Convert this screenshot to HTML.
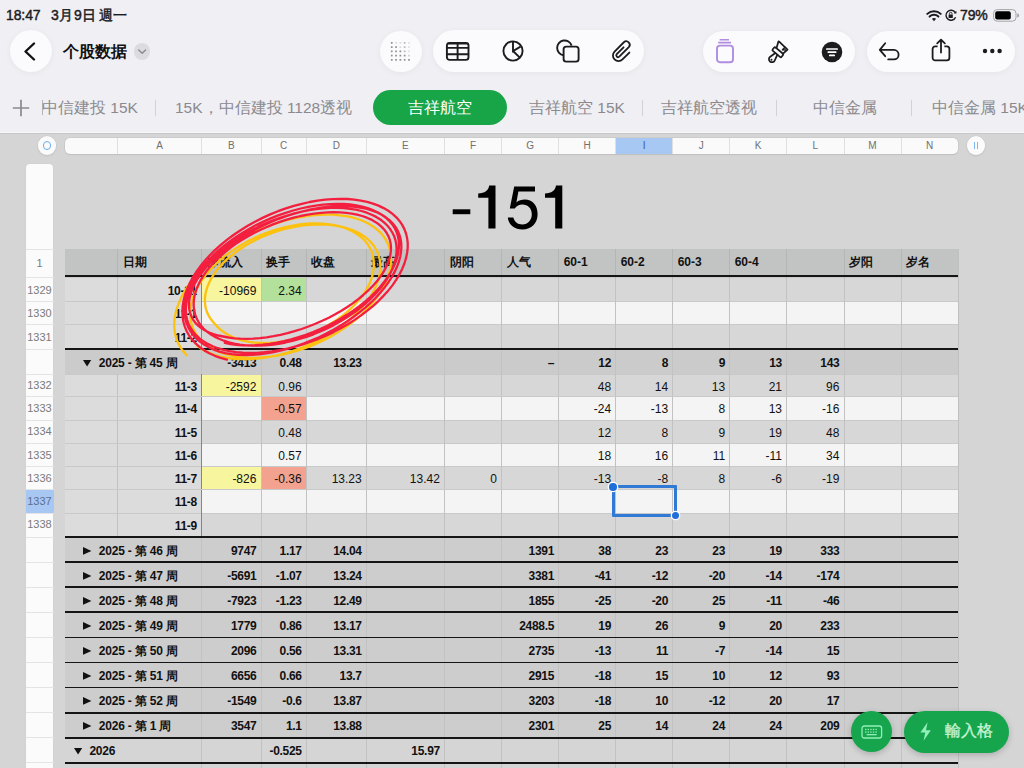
<!DOCTYPE html>
<html><head><meta charset="utf-8">
<style>
*{margin:0;padding:0;box-sizing:border-box}
html,body{width:1024px;height:768px;overflow:hidden}
body{position:relative;background:#d5d5d5;font-family:"Liberation Sans",sans-serif;color:#000}
.abs{position:absolute}
#top{position:absolute;left:0;top:0;width:1024px;height:134px;background:#f0eff4}
#topline{position:absolute;left:0;top:131.8px;width:1024px;height:1.5px;background:#f6f6f9}
.st{position:absolute;top:5.8px;font-size:14px;font-weight:normal;-webkit-text-stroke:0.45px #1c1c1e;color:#1c1c1e;letter-spacing:-0.1px;line-height:18px}
.pill{position:absolute;background:#fbfbfd;border-radius:21px;box-shadow:0 1px 6px rgba(0,0,0,0.05)}
.tab{position:absolute;top:97.6px;font-size:15.5px;color:#8a8a8e;line-height:20px;white-space:nowrap}
.sep{position:absolute;top:100px;width:1px;height:16px;background:#d2d2d6}
#cbar{position:absolute;left:64.5px;top:137.8px;width:893.5px;height:16.2px;background:#fafafa;border-radius:5px;box-shadow:0 0 0 0.6px #c4c4c4, 0 1px 1px rgba(0,0,0,0.12);overflow:hidden}
.cl{position:absolute;top:0;height:16.2px;line-height:16.5px;text-align:center;font-size:10px;color:#707070;border-left:1px solid #e0e0e0}
.cl.sel{background:#a8c8f4;color:#3a5a8a}
#rncol{position:absolute;left:25.5px;top:163.5px;width:27.6px;height:620px;background:#fbfbfb;border-radius:4px 4px 0 0;box-shadow:0 0 0 0.5px #cfcfcf}
.rn{position:absolute;left:25.5px;width:28px;text-align:center;font-size:11px;color:#7a7a7a}
.rn.sel{background:#a9c7f3;color:#5a6f90}
.rnl{position:absolute;left:25.5px;width:28px;height:1px;background:#e4e4e4}
.rb{position:absolute;left:64.5px;width:893.5px}
.fl{position:absolute}
.hl{position:absolute;left:64.5px;width:893.5px;height:1px;background:#c9c9c9}
.vl{position:absolute;width:1px;background:#c2c2c2}
.tk{position:absolute;left:64.5px;width:893.5px;height:1.9px;background:#151515}
.c{position:absolute;font-size:12px;text-align:right;padding-right:4.6px;padding-top:1.5px;white-space:nowrap;color:#111}
.c.b{font-weight:bold;letter-spacing:-0.3px}
.c.h{font-weight:bold;text-align:left;padding-left:5px;padding-right:0;padding-top:0;margin-top:-0.6px}
.gl{position:absolute;font-size:12px;font-weight:bold;white-space:nowrap;color:#111;padding-top:1.5px;letter-spacing:-0.2px}
.tri{display:inline-block;width:16.5px;font-size:11px}
#tleft{position:absolute;left:64.5px;top:249px;width:1px;height:540px;background:#c0c0c0}
</style></head><body>
<div id="top"></div>
<div id="topline"></div><div class="abs" style="left:0;top:133.3px;width:1024px;height:1.2px;background:#c6c6c8"></div>
<!-- status bar -->
<div class="st" style="left:6px">18:47</div><div class="st" style="left:51px;letter-spacing:0.6px">3月9日</div><div class="st" style="left:99px">週一</div>
<div class="st" style="left:960px">79%</div>
<svg class="abs" style="left:925.5px;top:9.6px" width="16" height="12" viewBox="0 0 16 12">
<path d="M8 11.2 L5.9 8.8 A3.2 3.2 0 0 1 10.1 8.8 Z" fill="#1c1c1e"/>
<path d="M3.6 6.6 A6.4 6.4 0 0 1 12.4 6.6" stroke="#1c1c1e" stroke-width="2" fill="none" stroke-linecap="round"/>
<path d="M1.3 3.9 A9.6 9.6 0 0 1 14.7 3.9" stroke="#1c1c1e" stroke-width="2" fill="none" stroke-linecap="round"/>
</svg>
<svg class="abs" style="left:944px;top:9px" width="14" height="13" viewBox="0 0 14 13">
<path d="M11.6 8.2 A5 5 0 1 1 11.2 3.5" stroke="#1c1c1e" stroke-width="1.4" fill="none"/>
<path d="M9.8 4.4 L12.6 4.6 L12.2 1.8 Z" fill="#1c1c1e"/>
<rect x="4.6" y="5.5" width="4.2" height="3.4" rx="0.5" fill="#1c1c1e"/>
<path d="M5.4 5.6 V4.6 A1.3 1.3 0 0 1 8 4.6 V5.6" stroke="#1c1c1e" stroke-width="0.9" fill="none"/>
</svg>
<svg class="abs" style="left:993px;top:9px" width="28" height="13" viewBox="0 0 28 13">
<rect x="0.6" y="0.6" width="22.4" height="11.6" rx="3.6" fill="none" stroke="#a5a5aa" stroke-width="1"/>
<rect x="2.2" y="2.2" width="15.6" height="8.4" rx="2" fill="#000"/>
<path d="M24.2 4.4 A2 2 0 0 1 24.2 8.4 Z" fill="#a5a5aa"/>
</svg>
<!-- back button -->
<div class="pill" style="left:9.6px;top:29.8px;width:42px;height:42px;border-radius:50%"></div>
<svg class="abs" style="left:20px;top:41px" width="20" height="21" viewBox="0 0 20 21">
<path d="M14 2.5 L5.5 10.5 L14 18.5" stroke="#111" stroke-width="2.4" fill="none" stroke-linecap="round" stroke-linejoin="round"/>
</svg>
<div class="abs" style="left:63.3px;top:42px;font-size:16px;font-weight:bold;color:#111;line-height:20px">个股数据</div>
<div class="abs" style="left:133.5px;top:43px;width:16.5px;height:16.5px;border-radius:50%;background:#dcdce0"></div>
<svg class="abs" style="left:133.5px;top:43px" width="17" height="17" viewBox="0 0 17 17">
<path d="M4.7 7 L8.2 10.2 L11.6 7" stroke="#8a8a8e" stroke-width="1.4" fill="none" stroke-linecap="round" stroke-linejoin="round"/>
</svg>
<!-- center toolbar -->
<div class="pill" style="left:380px;top:30.5px;width:41.5px;height:41.5px;border-radius:50%"></div>
<svg class="abs" style="left:380px;top:30px" width="42" height="42" viewBox="0 0 42 42"><g fill="#8e8e93"><rect x="10.90" y="12.00" width="1.7" height="1.7" opacity="1"/><rect x="15.20" y="12.00" width="1.7" height="1.7" opacity="0.3"/><rect x="19.50" y="12.00" width="1.7" height="1.7" opacity="0.3"/><rect x="23.80" y="12.00" width="1.7" height="1.7" opacity="0.6"/><rect x="28.10" y="12.00" width="1.7" height="1.7" opacity="0.25"/><rect x="10.90" y="16.25" width="1.7" height="1.7" opacity="1"/><rect x="15.20" y="16.25" width="1.7" height="1.7" opacity="1"/><rect x="19.50" y="16.25" width="1.7" height="1.7" opacity="0.3"/><rect x="23.80" y="16.25" width="1.7" height="1.7" opacity="0.6"/><rect x="28.10" y="16.25" width="1.7" height="1.7" opacity="0.25"/><rect x="10.90" y="20.50" width="1.7" height="1.7" opacity="1"/><rect x="15.20" y="20.50" width="1.7" height="1.7" opacity="1"/><rect x="19.50" y="20.50" width="1.7" height="1.7" opacity="1"/><rect x="23.80" y="20.50" width="1.7" height="1.7" opacity="0.6"/><rect x="28.10" y="20.50" width="1.7" height="1.7" opacity="0.25"/><rect x="10.90" y="24.75" width="1.7" height="1.7" opacity="1"/><rect x="15.20" y="24.75" width="1.7" height="1.7" opacity="1"/><rect x="19.50" y="24.75" width="1.7" height="1.7" opacity="1"/><rect x="23.80" y="24.75" width="1.7" height="1.7" opacity="1"/><rect x="28.10" y="24.75" width="1.7" height="1.7" opacity="0.4"/><rect x="10.90" y="29.00" width="1.7" height="1.7" opacity="1"/><rect x="15.20" y="29.00" width="1.7" height="1.7" opacity="1"/><rect x="19.50" y="29.00" width="1.7" height="1.7" opacity="1"/><rect x="23.80" y="29.00" width="1.7" height="1.7" opacity="1"/><rect x="28.10" y="29.00" width="1.7" height="1.7" opacity="1"/></g></svg>
<div class="pill" style="left:433px;top:30px;width:211px;height:42px"></div>
<svg class="abs" style="left:445px;top:41px" width="26" height="21" viewBox="0 0 26 21">
<rect x="1.9" y="1.9" width="21.6" height="17" rx="2.6" fill="none" stroke="#1c1c1e" stroke-width="1.9"/>
<path d="M1.9 2.6 H23.5 M1.9 6.9 H23.5 M1.9 13.3 H23.5 M12.6 3 V18.9" stroke="#1c1c1e" stroke-width="1.9"/>
</svg>
<svg class="abs" style="left:501px;top:39px" width="24" height="24" viewBox="0 0 24 24">
<circle cx="12" cy="12" r="9.6" fill="none" stroke="#1c1c1e" stroke-width="1.9"/>
<path d="M12 2.4 V12 L19.5 7.6 M12 12 L18.6 18.4" stroke="#1c1c1e" stroke-width="1.9" fill="none"/>
</svg>
<svg class="abs" style="left:554px;top:38px" width="28" height="26" viewBox="0 0 28 26">
<path d="M9.6 17.2 A7.4 7.4 0 1 1 17.6 7.6" fill="none" stroke="#1c1c1e" stroke-width="1.9"/>
<rect x="9.6" y="8.6" width="15" height="15" rx="2.6" fill="none" stroke="#1c1c1e" stroke-width="1.9"/>
</svg>
<svg class="abs" style="left:606px;top:36px" width="32" height="30" viewBox="0 0 32 30">
<g transform="rotate(-45)"><path d="M4.41 20.43 L-5.23 20.43 A1.8 1.8 0 0 0 -5.23 24.02 L8.2 24.02 A3.5 3.5 0 0 0 8.2 17.03 L-4.92 17.03 A5.6 5.6 0 0 0 -4.92 28.24 L4.84 28.24" fill="none" stroke="#1c1c1e" stroke-width="1.8" stroke-linecap="round"/></g>
</svg>
<!-- right toolbar 1 -->
<div class="pill" style="left:703px;top:30.5px;width:152px;height:41.5px"></div>
<svg class="abs" style="left:714px;top:38px" width="22" height="26" viewBox="0 0 22 26">
<path d="M5.6 1.8 H15 M4.2 4.6 H17" stroke="#b08de0" stroke-width="1.6"/>
<rect x="3" y="7.6" width="16" height="16.6" rx="3" fill="none" stroke="#b08de0" stroke-width="1.9"/>
</svg>
<svg class="abs" style="left:764px;top:36px" width="30" height="30" viewBox="0 0 30 30">
<g transform="translate(15.24 14.52) rotate(40)" fill="none" stroke="#1c1c1e" stroke-width="1.75" stroke-linejoin="round" stroke-linecap="round">
<path d="M-3.6 0 L-6.3 -6.1 Q-6.5 -6.8 -5.8 -6.8 L5.7 -6.1 L5.0 0"/>
<rect x="-5.8" y="0" width="11.6" height="4.4" rx="1.2"/>
<path d="M-1.3 4.4 L-2.9 10.6 A3 3 0 1 0 2.9 10.6 L1.3 4.4"/>
<path d="M2.4 -6.1 L2.0 -2.6 L4.6 -4.4" stroke-width="1.5"/>
<circle cx="0" cy="12" r="1" fill="#1c1c1e" stroke="none"/>
</g>
</svg>
<svg class="abs" style="left:821px;top:40.5px" width="22" height="22" viewBox="0 0 22 22">
<circle cx="11" cy="11" r="10.3" fill="#1c1c1e"/>
<path d="M5.8 8 H16.2 M7.3 11.2 H14.7 M8.8 14.4 H13.2" stroke="#fff" stroke-width="1.7" stroke-linecap="round"/>
</svg>
<!-- right toolbar 2 -->
<div class="pill" style="left:867px;top:30.5px;width:148px;height:41.5px"></div>
<svg class="abs" style="left:878px;top:41px" width="22" height="20" viewBox="0 0 22 20">
<path d="M7.2 2.2 L1.8 8.9 L7.2 15.2 M2.2 8.9 H15.85 A4.75 4.75 0 0 1 15.85 18.4 H10.2" fill="none" stroke="#1c1c1e" stroke-width="1.8" stroke-linecap="round" stroke-linejoin="round"/>
</svg>
<svg class="abs" style="left:930px;top:38px" width="22" height="24" viewBox="0 0 22 24">
<path d="M7.6 8.4 H5.2 A2.6 2.6 0 0 0 2.6 11 V19.8 A2.6 2.6 0 0 0 5.2 22.4 H16.8 A2.6 2.6 0 0 0 19.4 19.8 V11 A2.6 2.6 0 0 0 16.8 8.4 H14.4" fill="none" stroke="#1c1c1e" stroke-width="1.8"/>
<path d="M11 14.6 V1.8 M7.2 5.4 L11 1.6 L14.8 5.4" fill="none" stroke="#1c1c1e" stroke-width="1.8" stroke-linecap="round" stroke-linejoin="round"/>
</svg>
<svg class="abs" style="left:981px;top:48px" width="23" height="6" viewBox="0 0 23 6">
<circle cx="4" cy="3" r="2.2" fill="#1c1c1e"/><circle cx="11.3" cy="3" r="2.2" fill="#1c1c1e"/><circle cx="18.6" cy="3" r="2.2" fill="#1c1c1e"/>
</svg>
<!-- tabs -->
<svg class="abs" style="left:12px;top:99px" width="18" height="18" viewBox="0 0 18 18">
<path d="M9 0.8 V17.2 M0.8 9 H17.2" stroke="#8a8a8e" stroke-width="1.7"/>
</svg>
<div class="sep" style="left:42px;top:100px;height:15px;width:1px;background:#b4b4b9"></div>
<div class="tab" style="left:42px">中信建投 15K</div>
<div class="sep" style="left:155px"></div>
<div class="tab" style="left:175px">15K，中信建投 1128透视</div>
<div class="abs" style="left:372.5px;top:89.5px;width:134.5px;height:35.5px;border-radius:18px;background:#17a548"></div>
<div class="tab" style="left:408px;color:#fff">吉祥航空</div>
<div class="tab" style="left:529px">吉祥航空 15K</div>
<div class="sep" style="left:641.5px"></div>
<div class="tab" style="left:661px">吉祥航空透视</div>
<div class="sep" style="left:776px"></div>
<div class="tab" style="left:812.5px">中信金属</div>
<div class="sep" style="left:910.5px"></div>
<div class="tab" style="left:932px">中信金属 15K</div>
<!-- column bar -->
<div class="abs" style="left:37.5px;top:136.3px;width:18.6px;height:18.6px;border-radius:50%;background:#fbfbfb;box-shadow:0 0 0 0.5px #c8c8c8,0 1px 2px rgba(0,0,0,0.1)"></div>
<div class="abs" style="left:42.6px;top:141.4px;width:8.4px;height:8.4px;border-radius:50%;border:1.6px solid #6aaef0"></div>
<div id="cbar">
<div class="cl" style="left:-0.5px;width:53px"></div>
<div class="cl" style="left:52.5px;width:84px">A</div>
<div class="cl" style="left:136.5px;width:59.5px">B</div>
<div class="cl" style="left:196px;width:45.3px">C</div>
<div class="cl" style="left:241.3px;width:60px">D</div>
<div class="cl" style="left:301.3px;width:78.2px">E</div>
<div class="cl" style="left:379.5px;width:57px">F</div>
<div class="cl" style="left:436.5px;width:57.2px">G</div>
<div class="cl" style="left:493.7px;width:57px">H</div>
<div class="cl sel" style="left:550.7px;width:57px">I</div>
<div class="cl" style="left:607.7px;width:57px">J</div>
<div class="cl" style="left:664.7px;width:56.9px">K</div>
<div class="cl" style="left:721.6px;width:57.4px">L</div>
<div class="cl" style="left:779px;width:57px">M</div>
<div class="cl" style="left:836px;width:57px">N</div>
</div>
<div class="abs" style="left:966.7px;top:136.3px;width:18.6px;height:18.6px;border-radius:50%;background:#fbfbfb;box-shadow:0 0 0 0.5px #c8c8c8,0 1px 2px rgba(0,0,0,0.1)"></div>
<div class="abs" style="left:973.8px;top:141.6px;width:1.2px;height:7.6px;background:#7db5ee"></div>
<div class="abs" style="left:977.2px;top:141.6px;width:1.2px;height:7.6px;background:#7db5ee"></div>
<!-- row number column -->
<div id="rncol"></div>
<div class="rn" style="top:249px;height:28.5px;line-height:28.5px">1</div>
<div class="rnl" style="top:248.5px"></div>
<div class="rn" style="top:277.5px;height:24px;line-height:24px">1329</div>
<div class="rnl" style="top:277px"></div>
<div class="rn" style="top:301.5px;height:23.2px;line-height:23.2px">1330</div>
<div class="rnl" style="top:301px"></div>
<div class="rn" style="top:324.7px;height:24.3px;line-height:24.3px">1331</div>
<div class="rnl" style="top:324.2px"></div>
<div class="rn" style="top:349px;height:25.3px;line-height:25.3px"></div>
<div class="rnl" style="top:348.5px"></div>
<div class="rn" style="top:374.3px;height:22.2px;line-height:22.2px">1332</div>
<div class="rnl" style="top:373.8px"></div>
<div class="rn" style="top:396.5px;height:23.8px;line-height:23.8px">1333</div>
<div class="rnl" style="top:396px"></div>
<div class="rn" style="top:420.3px;height:23.3px;line-height:23.3px">1334</div>
<div class="rnl" style="top:419.8px"></div>
<div class="rn" style="top:443.6px;height:23px;line-height:23px">1335</div>
<div class="rnl" style="top:443.1px"></div>
<div class="rn" style="top:466.6px;height:22.9px;line-height:22.9px">1336</div>
<div class="rnl" style="top:466.1px"></div>
<div class="rn sel" style="top:489.5px;height:23.9px;line-height:23.9px">1337</div>
<div class="rnl" style="top:489px"></div>
<div class="rn" style="top:513.4px;height:23.9px;line-height:23.9px">1338</div>
<div class="rnl" style="top:512.9px"></div>
<div class="rn" style="top:537.3px;height:25.05px;line-height:25.05px"></div>
<div class="rnl" style="top:536.8px"></div>
<div class="rn" style="top:562.35px;height:25.05px;line-height:25.05px"></div>
<div class="rnl" style="top:561.85px"></div>
<div class="rn" style="top:587.4px;height:25.05px;line-height:25.05px"></div>
<div class="rnl" style="top:586.9px"></div>
<div class="rn" style="top:612.45px;height:25.05px;line-height:25.05px"></div>
<div class="rnl" style="top:611.95px"></div>
<div class="rn" style="top:637.5px;height:25.05px;line-height:25.05px"></div>
<div class="rnl" style="top:637px"></div>
<div class="rn" style="top:662.55px;height:25.05px;line-height:25.05px"></div>
<div class="rnl" style="top:662.05px"></div>
<div class="rn" style="top:687.6px;height:25.05px;line-height:25.05px"></div>
<div class="rnl" style="top:687.1px"></div>
<div class="rn" style="top:712.65px;height:25.05px;line-height:25.05px"></div>
<div class="rnl" style="top:712.15px"></div>
<div class="rn" style="top:737.7px;height:25.05px;line-height:25.05px"></div>
<div class="rnl" style="top:737.2px"></div>
<div class="rn" style="top:762.75px;height:25.05px;line-height:25.05px"></div>
<div class="rnl" style="top:762.25px"></div>
<!-- title -->
<svg class="abs" style="left:0;top:0" width="1024" height="240" viewBox="0 0 1024 240">
<g fill="#000">
<rect x="452.7" y="209.3" width="17.6" height="4.9"/>
<path d="M495.5 185.6 V228.6 H488.4 V197.8 H478.2 V193.4 C485 193.2 488.2 191 489.2 185.6 Z"/>
<path d="M562.3 185.6 V228.6 H555.2 V197.8 H545 V193.4 C551.8 193.2 555 191 556 185.6 Z"/>
<path d="M514.2 186.4 H535 V191.6 H518.4 L516.4 202.4 C518.6 200.6 521.6 199.6 524.8 199.6 C532.4 199.6 537.6 205.4 537.6 214.2 C537.6 223.4 531.4 229.4 522.6 229.4 C514.2 229.4 508.6 224.8 507.8 217.4 H513.4 C514.2 221.6 517.6 224.4 522.4 224.4 C528 224.4 531.8 220.2 531.8 214.2 C531.8 208.4 527.8 204.6 522.4 204.6 C519.2 204.6 516.6 206 514.8 208.4 H509.8 Z"/>
</g></svg>
<!-- table -->
<div id="tleft"></div>
<div class="rb" style="top:249px;height:28.5px;background:#c1c4c3"></div>
<div class="rb" style="top:277.5px;height:24px;background:#d7d7d7"></div>
<div class="fl" style="left:64.5px;top:277.5px;width:137px;height:24px;background:#dcdcdc"></div>
<div class="fl" style="left:201.5px;top:277.5px;width:59.5px;height:24px;background:#f7f59e"></div>
<div class="fl" style="left:261px;top:277.5px;width:45.3px;height:24px;background:#b3e09b"></div>
<div class="rb" style="top:301.5px;height:23.2px;background:#f4f4f4"></div>
<div class="fl" style="left:64.5px;top:301.5px;width:137px;height:23.2px;background:#dcdcdc"></div>
<div class="rb" style="top:324.7px;height:24.3px;background:#d7d7d7"></div>
<div class="fl" style="left:64.5px;top:324.7px;width:137px;height:24.3px;background:#dcdcdc"></div>
<div class="rb" style="top:349px;height:25.3px;background:#cbcbcb"></div>
<div class="rb" style="top:374.3px;height:22.2px;background:#d7d7d7"></div>
<div class="fl" style="left:64.5px;top:374.3px;width:137px;height:22.2px;background:#dcdcdc"></div>
<div class="fl" style="left:201.5px;top:374.3px;width:59.5px;height:22.2px;background:#f7f59e"></div>
<div class="rb" style="top:396.5px;height:23.8px;background:#f4f4f4"></div>
<div class="fl" style="left:64.5px;top:396.5px;width:137px;height:23.8px;background:#dcdcdc"></div>
<div class="fl" style="left:261px;top:396.5px;width:45.3px;height:23.8px;background:#f3a290"></div>
<div class="rb" style="top:420.3px;height:23.3px;background:#d7d7d7"></div>
<div class="fl" style="left:64.5px;top:420.3px;width:137px;height:23.3px;background:#dcdcdc"></div>
<div class="rb" style="top:443.6px;height:23px;background:#f4f4f4"></div>
<div class="fl" style="left:64.5px;top:443.6px;width:137px;height:23px;background:#dcdcdc"></div>
<div class="rb" style="top:466.6px;height:22.9px;background:#d7d7d7"></div>
<div class="fl" style="left:64.5px;top:466.6px;width:137px;height:22.9px;background:#dcdcdc"></div>
<div class="fl" style="left:201.5px;top:466.6px;width:59.5px;height:22.9px;background:#f7f59e"></div>
<div class="fl" style="left:261px;top:466.6px;width:45.3px;height:22.9px;background:#f3a290"></div>
<div class="rb" style="top:489.5px;height:23.9px;background:#f4f4f4"></div>
<div class="fl" style="left:64.5px;top:489.5px;width:137px;height:23.9px;background:#dcdcdc"></div>
<div class="rb" style="top:513.4px;height:23.9px;background:#d7d7d7"></div>
<div class="fl" style="left:64.5px;top:513.4px;width:137px;height:23.9px;background:#dcdcdc"></div>
<div class="rb" style="top:537.3px;height:25.05px;background:#cdcdcd"></div>
<div class="rb" style="top:562.35px;height:25.05px;background:#cdcdcd"></div>
<div class="rb" style="top:587.4px;height:25.05px;background:#cdcdcd"></div>
<div class="rb" style="top:612.45px;height:25.05px;background:#cdcdcd"></div>
<div class="rb" style="top:637.5px;height:25.05px;background:#cdcdcd"></div>
<div class="rb" style="top:662.55px;height:25.05px;background:#cdcdcd"></div>
<div class="rb" style="top:687.6px;height:25.05px;background:#cdcdcd"></div>
<div class="rb" style="top:712.65px;height:25.05px;background:#cdcdcd"></div>
<div class="rb" style="top:737.7px;height:25.05px;background:#d5d5d5"></div>
<div class="rb" style="top:762.75px;height:25.05px;background:#d5d5d5"></div>
<div class="hl" style="top:277px"></div>
<div class="hl" style="top:301px"></div>
<div class="hl" style="top:324.2px"></div>
<div class="hl" style="top:348.5px"></div>
<div class="hl" style="top:373.8px"></div>
<div class="hl" style="top:396px"></div>
<div class="hl" style="top:419.8px"></div>
<div class="hl" style="top:443.1px"></div>
<div class="hl" style="top:466.1px"></div>
<div class="hl" style="top:489px"></div>
<div class="hl" style="top:512.9px"></div>
<div class="hl" style="top:536.8px"></div>
<div class="hl" style="top:561.85px"></div>
<div class="hl" style="top:586.9px"></div>
<div class="hl" style="top:611.95px"></div>
<div class="hl" style="top:637px"></div>
<div class="hl" style="top:662.05px"></div>
<div class="hl" style="top:687.1px"></div>
<div class="hl" style="top:712.15px"></div>
<div class="hl" style="top:737.2px"></div>
<div class="hl" style="top:762.25px"></div>
<div class="vl" style="left:117px;top:249px;height:28.5px;background:#b3b6b5"></div>
<div class="vl" style="left:201px;top:249px;height:28.5px;background:#b3b6b5"></div>
<div class="vl" style="left:260.5px;top:249px;height:28.5px;background:#b3b6b5"></div>
<div class="vl" style="left:305.8px;top:249px;height:28.5px;background:#b3b6b5"></div>
<div class="vl" style="left:365.8px;top:249px;height:28.5px;background:#b3b6b5"></div>
<div class="vl" style="left:444px;top:249px;height:28.5px;background:#b3b6b5"></div>
<div class="vl" style="left:501px;top:249px;height:28.5px;background:#b3b6b5"></div>
<div class="vl" style="left:558.2px;top:249px;height:28.5px;background:#b3b6b5"></div>
<div class="vl" style="left:615.2px;top:249px;height:28.5px;background:#b3b6b5"></div>
<div class="vl" style="left:672.2px;top:249px;height:28.5px;background:#b3b6b5"></div>
<div class="vl" style="left:729.2px;top:249px;height:28.5px;background:#b3b6b5"></div>
<div class="vl" style="left:786.1px;top:249px;height:28.5px;background:#b3b6b5"></div>
<div class="vl" style="left:843.5px;top:249px;height:28.5px;background:#b3b6b5"></div>
<div class="vl" style="left:900.5px;top:249px;height:28.5px;background:#b3b6b5"></div>
<div class="vl" style="left:117px;top:277.5px;height:24px"></div>
<div class="vl" style="left:201px;top:277.5px;height:24px;background:#858585"></div>
<div class="vl" style="left:260.5px;top:277.5px;height:24px"></div>
<div class="vl" style="left:305.8px;top:277.5px;height:24px"></div>
<div class="vl" style="left:365.8px;top:277.5px;height:24px"></div>
<div class="vl" style="left:444px;top:277.5px;height:24px"></div>
<div class="vl" style="left:501px;top:277.5px;height:24px"></div>
<div class="vl" style="left:558.2px;top:277.5px;height:24px"></div>
<div class="vl" style="left:615.2px;top:277.5px;height:24px"></div>
<div class="vl" style="left:672.2px;top:277.5px;height:24px"></div>
<div class="vl" style="left:729.2px;top:277.5px;height:24px"></div>
<div class="vl" style="left:786.1px;top:277.5px;height:24px"></div>
<div class="vl" style="left:843.5px;top:277.5px;height:24px"></div>
<div class="vl" style="left:900.5px;top:277.5px;height:24px"></div>
<div class="vl" style="left:117px;top:301.5px;height:23.2px"></div>
<div class="vl" style="left:201px;top:301.5px;height:23.2px;background:#858585"></div>
<div class="vl" style="left:260.5px;top:301.5px;height:23.2px"></div>
<div class="vl" style="left:305.8px;top:301.5px;height:23.2px"></div>
<div class="vl" style="left:365.8px;top:301.5px;height:23.2px"></div>
<div class="vl" style="left:444px;top:301.5px;height:23.2px"></div>
<div class="vl" style="left:501px;top:301.5px;height:23.2px"></div>
<div class="vl" style="left:558.2px;top:301.5px;height:23.2px"></div>
<div class="vl" style="left:615.2px;top:301.5px;height:23.2px"></div>
<div class="vl" style="left:672.2px;top:301.5px;height:23.2px"></div>
<div class="vl" style="left:729.2px;top:301.5px;height:23.2px"></div>
<div class="vl" style="left:786.1px;top:301.5px;height:23.2px"></div>
<div class="vl" style="left:843.5px;top:301.5px;height:23.2px"></div>
<div class="vl" style="left:900.5px;top:301.5px;height:23.2px"></div>
<div class="vl" style="left:117px;top:324.7px;height:24.3px"></div>
<div class="vl" style="left:201px;top:324.7px;height:24.3px;background:#858585"></div>
<div class="vl" style="left:260.5px;top:324.7px;height:24.3px"></div>
<div class="vl" style="left:305.8px;top:324.7px;height:24.3px"></div>
<div class="vl" style="left:365.8px;top:324.7px;height:24.3px"></div>
<div class="vl" style="left:444px;top:324.7px;height:24.3px"></div>
<div class="vl" style="left:501px;top:324.7px;height:24.3px"></div>
<div class="vl" style="left:558.2px;top:324.7px;height:24.3px"></div>
<div class="vl" style="left:615.2px;top:324.7px;height:24.3px"></div>
<div class="vl" style="left:672.2px;top:324.7px;height:24.3px"></div>
<div class="vl" style="left:729.2px;top:324.7px;height:24.3px"></div>
<div class="vl" style="left:786.1px;top:324.7px;height:24.3px"></div>
<div class="vl" style="left:843.5px;top:324.7px;height:24.3px"></div>
<div class="vl" style="left:900.5px;top:324.7px;height:24.3px"></div>
<div class="vl" style="left:201px;top:349px;height:25.3px"></div>
<div class="vl" style="left:260.5px;top:349px;height:25.3px"></div>
<div class="vl" style="left:305.8px;top:349px;height:25.3px"></div>
<div class="vl" style="left:365.8px;top:349px;height:25.3px"></div>
<div class="vl" style="left:444px;top:349px;height:25.3px"></div>
<div class="vl" style="left:501px;top:349px;height:25.3px"></div>
<div class="vl" style="left:558.2px;top:349px;height:25.3px"></div>
<div class="vl" style="left:615.2px;top:349px;height:25.3px"></div>
<div class="vl" style="left:672.2px;top:349px;height:25.3px"></div>
<div class="vl" style="left:729.2px;top:349px;height:25.3px"></div>
<div class="vl" style="left:786.1px;top:349px;height:25.3px"></div>
<div class="vl" style="left:843.5px;top:349px;height:25.3px"></div>
<div class="vl" style="left:900.5px;top:349px;height:25.3px"></div>
<div class="vl" style="left:117px;top:374.3px;height:22.2px"></div>
<div class="vl" style="left:201px;top:374.3px;height:22.2px;background:#858585"></div>
<div class="vl" style="left:260.5px;top:374.3px;height:22.2px"></div>
<div class="vl" style="left:305.8px;top:374.3px;height:22.2px"></div>
<div class="vl" style="left:365.8px;top:374.3px;height:22.2px"></div>
<div class="vl" style="left:444px;top:374.3px;height:22.2px"></div>
<div class="vl" style="left:501px;top:374.3px;height:22.2px"></div>
<div class="vl" style="left:558.2px;top:374.3px;height:22.2px"></div>
<div class="vl" style="left:615.2px;top:374.3px;height:22.2px"></div>
<div class="vl" style="left:672.2px;top:374.3px;height:22.2px"></div>
<div class="vl" style="left:729.2px;top:374.3px;height:22.2px"></div>
<div class="vl" style="left:786.1px;top:374.3px;height:22.2px"></div>
<div class="vl" style="left:843.5px;top:374.3px;height:22.2px"></div>
<div class="vl" style="left:900.5px;top:374.3px;height:22.2px"></div>
<div class="vl" style="left:117px;top:396.5px;height:23.8px"></div>
<div class="vl" style="left:201px;top:396.5px;height:23.8px;background:#858585"></div>
<div class="vl" style="left:260.5px;top:396.5px;height:23.8px"></div>
<div class="vl" style="left:305.8px;top:396.5px;height:23.8px"></div>
<div class="vl" style="left:365.8px;top:396.5px;height:23.8px"></div>
<div class="vl" style="left:444px;top:396.5px;height:23.8px"></div>
<div class="vl" style="left:501px;top:396.5px;height:23.8px"></div>
<div class="vl" style="left:558.2px;top:396.5px;height:23.8px"></div>
<div class="vl" style="left:615.2px;top:396.5px;height:23.8px"></div>
<div class="vl" style="left:672.2px;top:396.5px;height:23.8px"></div>
<div class="vl" style="left:729.2px;top:396.5px;height:23.8px"></div>
<div class="vl" style="left:786.1px;top:396.5px;height:23.8px"></div>
<div class="vl" style="left:843.5px;top:396.5px;height:23.8px"></div>
<div class="vl" style="left:900.5px;top:396.5px;height:23.8px"></div>
<div class="vl" style="left:117px;top:420.3px;height:23.3px"></div>
<div class="vl" style="left:201px;top:420.3px;height:23.3px;background:#858585"></div>
<div class="vl" style="left:260.5px;top:420.3px;height:23.3px"></div>
<div class="vl" style="left:305.8px;top:420.3px;height:23.3px"></div>
<div class="vl" style="left:365.8px;top:420.3px;height:23.3px"></div>
<div class="vl" style="left:444px;top:420.3px;height:23.3px"></div>
<div class="vl" style="left:501px;top:420.3px;height:23.3px"></div>
<div class="vl" style="left:558.2px;top:420.3px;height:23.3px"></div>
<div class="vl" style="left:615.2px;top:420.3px;height:23.3px"></div>
<div class="vl" style="left:672.2px;top:420.3px;height:23.3px"></div>
<div class="vl" style="left:729.2px;top:420.3px;height:23.3px"></div>
<div class="vl" style="left:786.1px;top:420.3px;height:23.3px"></div>
<div class="vl" style="left:843.5px;top:420.3px;height:23.3px"></div>
<div class="vl" style="left:900.5px;top:420.3px;height:23.3px"></div>
<div class="vl" style="left:117px;top:443.6px;height:23px"></div>
<div class="vl" style="left:201px;top:443.6px;height:23px;background:#858585"></div>
<div class="vl" style="left:260.5px;top:443.6px;height:23px"></div>
<div class="vl" style="left:305.8px;top:443.6px;height:23px"></div>
<div class="vl" style="left:365.8px;top:443.6px;height:23px"></div>
<div class="vl" style="left:444px;top:443.6px;height:23px"></div>
<div class="vl" style="left:501px;top:443.6px;height:23px"></div>
<div class="vl" style="left:558.2px;top:443.6px;height:23px"></div>
<div class="vl" style="left:615.2px;top:443.6px;height:23px"></div>
<div class="vl" style="left:672.2px;top:443.6px;height:23px"></div>
<div class="vl" style="left:729.2px;top:443.6px;height:23px"></div>
<div class="vl" style="left:786.1px;top:443.6px;height:23px"></div>
<div class="vl" style="left:843.5px;top:443.6px;height:23px"></div>
<div class="vl" style="left:900.5px;top:443.6px;height:23px"></div>
<div class="vl" style="left:117px;top:466.6px;height:22.9px"></div>
<div class="vl" style="left:201px;top:466.6px;height:22.9px;background:#858585"></div>
<div class="vl" style="left:260.5px;top:466.6px;height:22.9px"></div>
<div class="vl" style="left:305.8px;top:466.6px;height:22.9px"></div>
<div class="vl" style="left:365.8px;top:466.6px;height:22.9px"></div>
<div class="vl" style="left:444px;top:466.6px;height:22.9px"></div>
<div class="vl" style="left:501px;top:466.6px;height:22.9px"></div>
<div class="vl" style="left:558.2px;top:466.6px;height:22.9px"></div>
<div class="vl" style="left:615.2px;top:466.6px;height:22.9px"></div>
<div class="vl" style="left:672.2px;top:466.6px;height:22.9px"></div>
<div class="vl" style="left:729.2px;top:466.6px;height:22.9px"></div>
<div class="vl" style="left:786.1px;top:466.6px;height:22.9px"></div>
<div class="vl" style="left:843.5px;top:466.6px;height:22.9px"></div>
<div class="vl" style="left:900.5px;top:466.6px;height:22.9px"></div>
<div class="vl" style="left:117px;top:489.5px;height:23.9px"></div>
<div class="vl" style="left:201px;top:489.5px;height:23.9px;background:#858585"></div>
<div class="vl" style="left:260.5px;top:489.5px;height:23.9px"></div>
<div class="vl" style="left:305.8px;top:489.5px;height:23.9px"></div>
<div class="vl" style="left:365.8px;top:489.5px;height:23.9px"></div>
<div class="vl" style="left:444px;top:489.5px;height:23.9px"></div>
<div class="vl" style="left:501px;top:489.5px;height:23.9px"></div>
<div class="vl" style="left:558.2px;top:489.5px;height:23.9px"></div>
<div class="vl" style="left:615.2px;top:489.5px;height:23.9px"></div>
<div class="vl" style="left:672.2px;top:489.5px;height:23.9px"></div>
<div class="vl" style="left:729.2px;top:489.5px;height:23.9px"></div>
<div class="vl" style="left:786.1px;top:489.5px;height:23.9px"></div>
<div class="vl" style="left:843.5px;top:489.5px;height:23.9px"></div>
<div class="vl" style="left:900.5px;top:489.5px;height:23.9px"></div>
<div class="vl" style="left:117px;top:513.4px;height:23.9px"></div>
<div class="vl" style="left:201px;top:513.4px;height:23.9px;background:#858585"></div>
<div class="vl" style="left:260.5px;top:513.4px;height:23.9px"></div>
<div class="vl" style="left:305.8px;top:513.4px;height:23.9px"></div>
<div class="vl" style="left:365.8px;top:513.4px;height:23.9px"></div>
<div class="vl" style="left:444px;top:513.4px;height:23.9px"></div>
<div class="vl" style="left:501px;top:513.4px;height:23.9px"></div>
<div class="vl" style="left:558.2px;top:513.4px;height:23.9px"></div>
<div class="vl" style="left:615.2px;top:513.4px;height:23.9px"></div>
<div class="vl" style="left:672.2px;top:513.4px;height:23.9px"></div>
<div class="vl" style="left:729.2px;top:513.4px;height:23.9px"></div>
<div class="vl" style="left:786.1px;top:513.4px;height:23.9px"></div>
<div class="vl" style="left:843.5px;top:513.4px;height:23.9px"></div>
<div class="vl" style="left:900.5px;top:513.4px;height:23.9px"></div>
<div class="vl" style="left:201px;top:537.3px;height:25.05px"></div>
<div class="vl" style="left:260.5px;top:537.3px;height:25.05px"></div>
<div class="vl" style="left:305.8px;top:537.3px;height:25.05px"></div>
<div class="vl" style="left:365.8px;top:537.3px;height:25.05px"></div>
<div class="vl" style="left:444px;top:537.3px;height:25.05px"></div>
<div class="vl" style="left:501px;top:537.3px;height:25.05px"></div>
<div class="vl" style="left:558.2px;top:537.3px;height:25.05px"></div>
<div class="vl" style="left:615.2px;top:537.3px;height:25.05px"></div>
<div class="vl" style="left:672.2px;top:537.3px;height:25.05px"></div>
<div class="vl" style="left:729.2px;top:537.3px;height:25.05px"></div>
<div class="vl" style="left:786.1px;top:537.3px;height:25.05px"></div>
<div class="vl" style="left:843.5px;top:537.3px;height:25.05px"></div>
<div class="vl" style="left:900.5px;top:537.3px;height:25.05px"></div>
<div class="vl" style="left:201px;top:562.35px;height:25.05px"></div>
<div class="vl" style="left:260.5px;top:562.35px;height:25.05px"></div>
<div class="vl" style="left:305.8px;top:562.35px;height:25.05px"></div>
<div class="vl" style="left:365.8px;top:562.35px;height:25.05px"></div>
<div class="vl" style="left:444px;top:562.35px;height:25.05px"></div>
<div class="vl" style="left:501px;top:562.35px;height:25.05px"></div>
<div class="vl" style="left:558.2px;top:562.35px;height:25.05px"></div>
<div class="vl" style="left:615.2px;top:562.35px;height:25.05px"></div>
<div class="vl" style="left:672.2px;top:562.35px;height:25.05px"></div>
<div class="vl" style="left:729.2px;top:562.35px;height:25.05px"></div>
<div class="vl" style="left:786.1px;top:562.35px;height:25.05px"></div>
<div class="vl" style="left:843.5px;top:562.35px;height:25.05px"></div>
<div class="vl" style="left:900.5px;top:562.35px;height:25.05px"></div>
<div class="vl" style="left:201px;top:587.4px;height:25.05px"></div>
<div class="vl" style="left:260.5px;top:587.4px;height:25.05px"></div>
<div class="vl" style="left:305.8px;top:587.4px;height:25.05px"></div>
<div class="vl" style="left:365.8px;top:587.4px;height:25.05px"></div>
<div class="vl" style="left:444px;top:587.4px;height:25.05px"></div>
<div class="vl" style="left:501px;top:587.4px;height:25.05px"></div>
<div class="vl" style="left:558.2px;top:587.4px;height:25.05px"></div>
<div class="vl" style="left:615.2px;top:587.4px;height:25.05px"></div>
<div class="vl" style="left:672.2px;top:587.4px;height:25.05px"></div>
<div class="vl" style="left:729.2px;top:587.4px;height:25.05px"></div>
<div class="vl" style="left:786.1px;top:587.4px;height:25.05px"></div>
<div class="vl" style="left:843.5px;top:587.4px;height:25.05px"></div>
<div class="vl" style="left:900.5px;top:587.4px;height:25.05px"></div>
<div class="vl" style="left:201px;top:612.45px;height:25.05px"></div>
<div class="vl" style="left:260.5px;top:612.45px;height:25.05px"></div>
<div class="vl" style="left:305.8px;top:612.45px;height:25.05px"></div>
<div class="vl" style="left:365.8px;top:612.45px;height:25.05px"></div>
<div class="vl" style="left:444px;top:612.45px;height:25.05px"></div>
<div class="vl" style="left:501px;top:612.45px;height:25.05px"></div>
<div class="vl" style="left:558.2px;top:612.45px;height:25.05px"></div>
<div class="vl" style="left:615.2px;top:612.45px;height:25.05px"></div>
<div class="vl" style="left:672.2px;top:612.45px;height:25.05px"></div>
<div class="vl" style="left:729.2px;top:612.45px;height:25.05px"></div>
<div class="vl" style="left:786.1px;top:612.45px;height:25.05px"></div>
<div class="vl" style="left:843.5px;top:612.45px;height:25.05px"></div>
<div class="vl" style="left:900.5px;top:612.45px;height:25.05px"></div>
<div class="vl" style="left:201px;top:637.5px;height:25.05px"></div>
<div class="vl" style="left:260.5px;top:637.5px;height:25.05px"></div>
<div class="vl" style="left:305.8px;top:637.5px;height:25.05px"></div>
<div class="vl" style="left:365.8px;top:637.5px;height:25.05px"></div>
<div class="vl" style="left:444px;top:637.5px;height:25.05px"></div>
<div class="vl" style="left:501px;top:637.5px;height:25.05px"></div>
<div class="vl" style="left:558.2px;top:637.5px;height:25.05px"></div>
<div class="vl" style="left:615.2px;top:637.5px;height:25.05px"></div>
<div class="vl" style="left:672.2px;top:637.5px;height:25.05px"></div>
<div class="vl" style="left:729.2px;top:637.5px;height:25.05px"></div>
<div class="vl" style="left:786.1px;top:637.5px;height:25.05px"></div>
<div class="vl" style="left:843.5px;top:637.5px;height:25.05px"></div>
<div class="vl" style="left:900.5px;top:637.5px;height:25.05px"></div>
<div class="vl" style="left:201px;top:662.55px;height:25.05px"></div>
<div class="vl" style="left:260.5px;top:662.55px;height:25.05px"></div>
<div class="vl" style="left:305.8px;top:662.55px;height:25.05px"></div>
<div class="vl" style="left:365.8px;top:662.55px;height:25.05px"></div>
<div class="vl" style="left:444px;top:662.55px;height:25.05px"></div>
<div class="vl" style="left:501px;top:662.55px;height:25.05px"></div>
<div class="vl" style="left:558.2px;top:662.55px;height:25.05px"></div>
<div class="vl" style="left:615.2px;top:662.55px;height:25.05px"></div>
<div class="vl" style="left:672.2px;top:662.55px;height:25.05px"></div>
<div class="vl" style="left:729.2px;top:662.55px;height:25.05px"></div>
<div class="vl" style="left:786.1px;top:662.55px;height:25.05px"></div>
<div class="vl" style="left:843.5px;top:662.55px;height:25.05px"></div>
<div class="vl" style="left:900.5px;top:662.55px;height:25.05px"></div>
<div class="vl" style="left:201px;top:687.6px;height:25.05px"></div>
<div class="vl" style="left:260.5px;top:687.6px;height:25.05px"></div>
<div class="vl" style="left:305.8px;top:687.6px;height:25.05px"></div>
<div class="vl" style="left:365.8px;top:687.6px;height:25.05px"></div>
<div class="vl" style="left:444px;top:687.6px;height:25.05px"></div>
<div class="vl" style="left:501px;top:687.6px;height:25.05px"></div>
<div class="vl" style="left:558.2px;top:687.6px;height:25.05px"></div>
<div class="vl" style="left:615.2px;top:687.6px;height:25.05px"></div>
<div class="vl" style="left:672.2px;top:687.6px;height:25.05px"></div>
<div class="vl" style="left:729.2px;top:687.6px;height:25.05px"></div>
<div class="vl" style="left:786.1px;top:687.6px;height:25.05px"></div>
<div class="vl" style="left:843.5px;top:687.6px;height:25.05px"></div>
<div class="vl" style="left:900.5px;top:687.6px;height:25.05px"></div>
<div class="vl" style="left:201px;top:712.65px;height:25.05px"></div>
<div class="vl" style="left:260.5px;top:712.65px;height:25.05px"></div>
<div class="vl" style="left:305.8px;top:712.65px;height:25.05px"></div>
<div class="vl" style="left:365.8px;top:712.65px;height:25.05px"></div>
<div class="vl" style="left:444px;top:712.65px;height:25.05px"></div>
<div class="vl" style="left:501px;top:712.65px;height:25.05px"></div>
<div class="vl" style="left:558.2px;top:712.65px;height:25.05px"></div>
<div class="vl" style="left:615.2px;top:712.65px;height:25.05px"></div>
<div class="vl" style="left:672.2px;top:712.65px;height:25.05px"></div>
<div class="vl" style="left:729.2px;top:712.65px;height:25.05px"></div>
<div class="vl" style="left:786.1px;top:712.65px;height:25.05px"></div>
<div class="vl" style="left:843.5px;top:712.65px;height:25.05px"></div>
<div class="vl" style="left:900.5px;top:712.65px;height:25.05px"></div>
<div class="vl" style="left:201px;top:737.7px;height:25.05px"></div>
<div class="vl" style="left:260.5px;top:737.7px;height:25.05px"></div>
<div class="vl" style="left:305.8px;top:737.7px;height:25.05px"></div>
<div class="vl" style="left:365.8px;top:737.7px;height:25.05px"></div>
<div class="vl" style="left:444px;top:737.7px;height:25.05px"></div>
<div class="vl" style="left:501px;top:737.7px;height:25.05px"></div>
<div class="vl" style="left:558.2px;top:737.7px;height:25.05px"></div>
<div class="vl" style="left:615.2px;top:737.7px;height:25.05px"></div>
<div class="vl" style="left:672.2px;top:737.7px;height:25.05px"></div>
<div class="vl" style="left:729.2px;top:737.7px;height:25.05px"></div>
<div class="vl" style="left:786.1px;top:737.7px;height:25.05px"></div>
<div class="vl" style="left:843.5px;top:737.7px;height:25.05px"></div>
<div class="vl" style="left:900.5px;top:737.7px;height:25.05px"></div>
<div class="vl" style="left:201px;top:762.75px;height:25.05px"></div>
<div class="vl" style="left:260.5px;top:762.75px;height:25.05px"></div>
<div class="vl" style="left:305.8px;top:762.75px;height:25.05px"></div>
<div class="vl" style="left:365.8px;top:762.75px;height:25.05px"></div>
<div class="vl" style="left:444px;top:762.75px;height:25.05px"></div>
<div class="vl" style="left:501px;top:762.75px;height:25.05px"></div>
<div class="vl" style="left:558.2px;top:762.75px;height:25.05px"></div>
<div class="vl" style="left:615.2px;top:762.75px;height:25.05px"></div>
<div class="vl" style="left:672.2px;top:762.75px;height:25.05px"></div>
<div class="vl" style="left:729.2px;top:762.75px;height:25.05px"></div>
<div class="vl" style="left:786.1px;top:762.75px;height:25.05px"></div>
<div class="vl" style="left:843.5px;top:762.75px;height:25.05px"></div>
<div class="vl" style="left:900.5px;top:762.75px;height:25.05px"></div>
<div class="tk" style="top:275.1px"></div>
<div class="tk" style="top:348px"></div>
<div class="tk" style="top:536.3px"></div>
<div class="tk" style="top:561.35px"></div>
<div class="tk" style="top:586.4px"></div>
<div class="tk" style="top:611.45px"></div>
<div class="tk" style="top:636.5px"></div>
<div class="tk" style="top:661.55px"></div>
<div class="tk" style="top:686.6px"></div>
<div class="tk" style="top:711.65px"></div>
<div class="tk" style="top:736.7px"></div>
<div class="tk" style="top:761.75px"></div>
<div class="tk" style="top:786.8px"></div>
<div class="c h" style="left:117.5px;top:249px;width:84px;height:28.5px;line-height:28.5px">日期</div>
<div class="c h" style="left:201.5px;top:249px;width:59.5px;height:28.5px;line-height:28.5px">净流入</div>
<div class="c h" style="left:261px;top:249px;width:45.3px;height:28.5px;line-height:28.5px">换手</div>
<div class="c h" style="left:306.3px;top:249px;width:60px;height:28.5px;line-height:28.5px">收盘</div>
<div class="c h" style="left:366.3px;top:249px;width:78.2px;height:28.5px;line-height:28.5px">最高</div>
<div class="c h" style="left:444.5px;top:249px;width:57px;height:28.5px;line-height:28.5px">阴阳</div>
<div class="c h" style="left:501.5px;top:249px;width:57.2px;height:28.5px;line-height:28.5px">人气</div>
<div class="c h" style="left:558.7px;top:249px;width:57px;height:28.5px;line-height:28.5px">60-1</div>
<div class="c h" style="left:615.7px;top:249px;width:57px;height:28.5px;line-height:28.5px">60-2</div>
<div class="c h" style="left:672.7px;top:249px;width:57px;height:28.5px;line-height:28.5px">60-3</div>
<div class="c h" style="left:729.7px;top:249px;width:56.9px;height:28.5px;line-height:28.5px">60-4</div>
<div class="c h" style="left:844px;top:249px;width:57px;height:28.5px;line-height:28.5px">岁阳</div>
<div class="c h" style="left:901px;top:249px;width:57px;height:28.5px;line-height:28.5px">岁名</div>
<div class="c b" style="left:117.5px;top:277.5px;width:84px;height:24px;line-height:24px">10-31</div>
<div class="c n" style="left:201.5px;top:277.5px;width:59.5px;height:24px;line-height:24px">-10969</div>
<div class="c n" style="left:261px;top:277.5px;width:45.3px;height:24px;line-height:24px">2.34</div>
<div class="c b" style="left:117.5px;top:301.5px;width:84px;height:23.2px;line-height:23.2px">11-1</div>
<div class="c b" style="left:117.5px;top:324.7px;width:84px;height:24.3px;line-height:24.3px">11-2</div>
<div class="c b" style="left:201.5px;top:349px;width:59.5px;height:25.3px;line-height:25.3px">-3413</div>
<div class="c b" style="left:261px;top:349px;width:45.3px;height:25.3px;line-height:25.3px">0.48</div>
<div class="c b" style="left:306.3px;top:349px;width:60px;height:25.3px;line-height:25.3px">13.23</div>
<div class="c b" style="left:501.5px;top:349px;width:57.2px;height:25.3px;line-height:25.3px">–</div>
<div class="c b" style="left:558.7px;top:349px;width:57px;height:25.3px;line-height:25.3px">12</div>
<div class="c b" style="left:615.7px;top:349px;width:57px;height:25.3px;line-height:25.3px">8</div>
<div class="c b" style="left:672.7px;top:349px;width:57px;height:25.3px;line-height:25.3px">9</div>
<div class="c b" style="left:729.7px;top:349px;width:56.9px;height:25.3px;line-height:25.3px">13</div>
<div class="c b" style="left:786.6px;top:349px;width:57.4px;height:25.3px;line-height:25.3px">143</div>
<div class="c b" style="left:117.5px;top:374.3px;width:84px;height:22.2px;line-height:22.2px">11-3</div>
<div class="c n" style="left:201.5px;top:374.3px;width:59.5px;height:22.2px;line-height:22.2px">-2592</div>
<div class="c n" style="left:261px;top:374.3px;width:45.3px;height:22.2px;line-height:22.2px">0.96</div>
<div class="c n" style="left:558.7px;top:374.3px;width:57px;height:22.2px;line-height:22.2px">48</div>
<div class="c n" style="left:615.7px;top:374.3px;width:57px;height:22.2px;line-height:22.2px">14</div>
<div class="c n" style="left:672.7px;top:374.3px;width:57px;height:22.2px;line-height:22.2px">13</div>
<div class="c n" style="left:729.7px;top:374.3px;width:56.9px;height:22.2px;line-height:22.2px">21</div>
<div class="c n" style="left:786.6px;top:374.3px;width:57.4px;height:22.2px;line-height:22.2px">96</div>
<div class="c b" style="left:117.5px;top:396.5px;width:84px;height:23.8px;line-height:23.8px">11-4</div>
<div class="c n" style="left:261px;top:396.5px;width:45.3px;height:23.8px;line-height:23.8px">-0.57</div>
<div class="c n" style="left:558.7px;top:396.5px;width:57px;height:23.8px;line-height:23.8px">-24</div>
<div class="c n" style="left:615.7px;top:396.5px;width:57px;height:23.8px;line-height:23.8px">-13</div>
<div class="c n" style="left:672.7px;top:396.5px;width:57px;height:23.8px;line-height:23.8px">8</div>
<div class="c n" style="left:729.7px;top:396.5px;width:56.9px;height:23.8px;line-height:23.8px">13</div>
<div class="c n" style="left:786.6px;top:396.5px;width:57.4px;height:23.8px;line-height:23.8px">-16</div>
<div class="c b" style="left:117.5px;top:420.3px;width:84px;height:23.3px;line-height:23.3px">11-5</div>
<div class="c n" style="left:261px;top:420.3px;width:45.3px;height:23.3px;line-height:23.3px">0.48</div>
<div class="c n" style="left:558.7px;top:420.3px;width:57px;height:23.3px;line-height:23.3px">12</div>
<div class="c n" style="left:615.7px;top:420.3px;width:57px;height:23.3px;line-height:23.3px">8</div>
<div class="c n" style="left:672.7px;top:420.3px;width:57px;height:23.3px;line-height:23.3px">9</div>
<div class="c n" style="left:729.7px;top:420.3px;width:56.9px;height:23.3px;line-height:23.3px">19</div>
<div class="c n" style="left:786.6px;top:420.3px;width:57.4px;height:23.3px;line-height:23.3px">48</div>
<div class="c b" style="left:117.5px;top:443.6px;width:84px;height:23px;line-height:23px">11-6</div>
<div class="c n" style="left:261px;top:443.6px;width:45.3px;height:23px;line-height:23px">0.57</div>
<div class="c n" style="left:558.7px;top:443.6px;width:57px;height:23px;line-height:23px">18</div>
<div class="c n" style="left:615.7px;top:443.6px;width:57px;height:23px;line-height:23px">16</div>
<div class="c n" style="left:672.7px;top:443.6px;width:57px;height:23px;line-height:23px">11</div>
<div class="c n" style="left:729.7px;top:443.6px;width:56.9px;height:23px;line-height:23px">-11</div>
<div class="c n" style="left:786.6px;top:443.6px;width:57.4px;height:23px;line-height:23px">34</div>
<div class="c b" style="left:117.5px;top:466.6px;width:84px;height:22.9px;line-height:22.9px">11-7</div>
<div class="c n" style="left:201.5px;top:466.6px;width:59.5px;height:22.9px;line-height:22.9px">-826</div>
<div class="c n" style="left:261px;top:466.6px;width:45.3px;height:22.9px;line-height:22.9px">-0.36</div>
<div class="c n" style="left:306.3px;top:466.6px;width:60px;height:22.9px;line-height:22.9px">13.23</div>
<div class="c n" style="left:366.3px;top:466.6px;width:78.2px;height:22.9px;line-height:22.9px">13.42</div>
<div class="c n" style="left:444.5px;top:466.6px;width:57px;height:22.9px;line-height:22.9px">0</div>
<div class="c n" style="left:558.7px;top:466.6px;width:57px;height:22.9px;line-height:22.9px">-13</div>
<div class="c n" style="left:615.7px;top:466.6px;width:57px;height:22.9px;line-height:22.9px">-8</div>
<div class="c n" style="left:672.7px;top:466.6px;width:57px;height:22.9px;line-height:22.9px">8</div>
<div class="c n" style="left:729.7px;top:466.6px;width:56.9px;height:22.9px;line-height:22.9px">-6</div>
<div class="c n" style="left:786.6px;top:466.6px;width:57.4px;height:22.9px;line-height:22.9px">-19</div>
<div class="c b" style="left:117.5px;top:489.5px;width:84px;height:23.9px;line-height:23.9px">11-8</div>
<div class="c b" style="left:117.5px;top:513.4px;width:84px;height:23.9px;line-height:23.9px">11-9</div>
<div class="c b" style="left:201.5px;top:537.3px;width:59.5px;height:25.05px;line-height:25.05px">9747</div>
<div class="c b" style="left:261px;top:537.3px;width:45.3px;height:25.05px;line-height:25.05px">1.17</div>
<div class="c b" style="left:306.3px;top:537.3px;width:60px;height:25.05px;line-height:25.05px">14.04</div>
<div class="c b" style="left:501.5px;top:537.3px;width:57.2px;height:25.05px;line-height:25.05px">1391</div>
<div class="c b" style="left:558.7px;top:537.3px;width:57px;height:25.05px;line-height:25.05px">38</div>
<div class="c b" style="left:615.7px;top:537.3px;width:57px;height:25.05px;line-height:25.05px">23</div>
<div class="c b" style="left:672.7px;top:537.3px;width:57px;height:25.05px;line-height:25.05px">23</div>
<div class="c b" style="left:729.7px;top:537.3px;width:56.9px;height:25.05px;line-height:25.05px">19</div>
<div class="c b" style="left:786.6px;top:537.3px;width:57.4px;height:25.05px;line-height:25.05px">333</div>
<div class="c b" style="left:201.5px;top:562.35px;width:59.5px;height:25.05px;line-height:25.05px">-5691</div>
<div class="c b" style="left:261px;top:562.35px;width:45.3px;height:25.05px;line-height:25.05px">-1.07</div>
<div class="c b" style="left:306.3px;top:562.35px;width:60px;height:25.05px;line-height:25.05px">13.24</div>
<div class="c b" style="left:501.5px;top:562.35px;width:57.2px;height:25.05px;line-height:25.05px">3381</div>
<div class="c b" style="left:558.7px;top:562.35px;width:57px;height:25.05px;line-height:25.05px">-41</div>
<div class="c b" style="left:615.7px;top:562.35px;width:57px;height:25.05px;line-height:25.05px">-12</div>
<div class="c b" style="left:672.7px;top:562.35px;width:57px;height:25.05px;line-height:25.05px">-20</div>
<div class="c b" style="left:729.7px;top:562.35px;width:56.9px;height:25.05px;line-height:25.05px">-14</div>
<div class="c b" style="left:786.6px;top:562.35px;width:57.4px;height:25.05px;line-height:25.05px">-174</div>
<div class="c b" style="left:201.5px;top:587.4px;width:59.5px;height:25.05px;line-height:25.05px">-7923</div>
<div class="c b" style="left:261px;top:587.4px;width:45.3px;height:25.05px;line-height:25.05px">-1.23</div>
<div class="c b" style="left:306.3px;top:587.4px;width:60px;height:25.05px;line-height:25.05px">12.49</div>
<div class="c b" style="left:501.5px;top:587.4px;width:57.2px;height:25.05px;line-height:25.05px">1855</div>
<div class="c b" style="left:558.7px;top:587.4px;width:57px;height:25.05px;line-height:25.05px">-25</div>
<div class="c b" style="left:615.7px;top:587.4px;width:57px;height:25.05px;line-height:25.05px">-20</div>
<div class="c b" style="left:672.7px;top:587.4px;width:57px;height:25.05px;line-height:25.05px">25</div>
<div class="c b" style="left:729.7px;top:587.4px;width:56.9px;height:25.05px;line-height:25.05px">-11</div>
<div class="c b" style="left:786.6px;top:587.4px;width:57.4px;height:25.05px;line-height:25.05px">-46</div>
<div class="c b" style="left:201.5px;top:612.45px;width:59.5px;height:25.05px;line-height:25.05px">1779</div>
<div class="c b" style="left:261px;top:612.45px;width:45.3px;height:25.05px;line-height:25.05px">0.86</div>
<div class="c b" style="left:306.3px;top:612.45px;width:60px;height:25.05px;line-height:25.05px">13.17</div>
<div class="c b" style="left:501.5px;top:612.45px;width:57.2px;height:25.05px;line-height:25.05px">2488.5</div>
<div class="c b" style="left:558.7px;top:612.45px;width:57px;height:25.05px;line-height:25.05px">19</div>
<div class="c b" style="left:615.7px;top:612.45px;width:57px;height:25.05px;line-height:25.05px">26</div>
<div class="c b" style="left:672.7px;top:612.45px;width:57px;height:25.05px;line-height:25.05px">9</div>
<div class="c b" style="left:729.7px;top:612.45px;width:56.9px;height:25.05px;line-height:25.05px">20</div>
<div class="c b" style="left:786.6px;top:612.45px;width:57.4px;height:25.05px;line-height:25.05px">233</div>
<div class="c b" style="left:201.5px;top:637.5px;width:59.5px;height:25.05px;line-height:25.05px">2096</div>
<div class="c b" style="left:261px;top:637.5px;width:45.3px;height:25.05px;line-height:25.05px">0.56</div>
<div class="c b" style="left:306.3px;top:637.5px;width:60px;height:25.05px;line-height:25.05px">13.31</div>
<div class="c b" style="left:501.5px;top:637.5px;width:57.2px;height:25.05px;line-height:25.05px">2735</div>
<div class="c b" style="left:558.7px;top:637.5px;width:57px;height:25.05px;line-height:25.05px">-13</div>
<div class="c b" style="left:615.7px;top:637.5px;width:57px;height:25.05px;line-height:25.05px">11</div>
<div class="c b" style="left:672.7px;top:637.5px;width:57px;height:25.05px;line-height:25.05px">-7</div>
<div class="c b" style="left:729.7px;top:637.5px;width:56.9px;height:25.05px;line-height:25.05px">-14</div>
<div class="c b" style="left:786.6px;top:637.5px;width:57.4px;height:25.05px;line-height:25.05px">15</div>
<div class="c b" style="left:201.5px;top:662.55px;width:59.5px;height:25.05px;line-height:25.05px">6656</div>
<div class="c b" style="left:261px;top:662.55px;width:45.3px;height:25.05px;line-height:25.05px">0.66</div>
<div class="c b" style="left:306.3px;top:662.55px;width:60px;height:25.05px;line-height:25.05px">13.7</div>
<div class="c b" style="left:501.5px;top:662.55px;width:57.2px;height:25.05px;line-height:25.05px">2915</div>
<div class="c b" style="left:558.7px;top:662.55px;width:57px;height:25.05px;line-height:25.05px">-18</div>
<div class="c b" style="left:615.7px;top:662.55px;width:57px;height:25.05px;line-height:25.05px">15</div>
<div class="c b" style="left:672.7px;top:662.55px;width:57px;height:25.05px;line-height:25.05px">10</div>
<div class="c b" style="left:729.7px;top:662.55px;width:56.9px;height:25.05px;line-height:25.05px">12</div>
<div class="c b" style="left:786.6px;top:662.55px;width:57.4px;height:25.05px;line-height:25.05px">93</div>
<div class="c b" style="left:201.5px;top:687.6px;width:59.5px;height:25.05px;line-height:25.05px">-1549</div>
<div class="c b" style="left:261px;top:687.6px;width:45.3px;height:25.05px;line-height:25.05px">-0.6</div>
<div class="c b" style="left:306.3px;top:687.6px;width:60px;height:25.05px;line-height:25.05px">13.87</div>
<div class="c b" style="left:501.5px;top:687.6px;width:57.2px;height:25.05px;line-height:25.05px">3203</div>
<div class="c b" style="left:558.7px;top:687.6px;width:57px;height:25.05px;line-height:25.05px">-18</div>
<div class="c b" style="left:615.7px;top:687.6px;width:57px;height:25.05px;line-height:25.05px">10</div>
<div class="c b" style="left:672.7px;top:687.6px;width:57px;height:25.05px;line-height:25.05px">-12</div>
<div class="c b" style="left:729.7px;top:687.6px;width:56.9px;height:25.05px;line-height:25.05px">20</div>
<div class="c b" style="left:786.6px;top:687.6px;width:57.4px;height:25.05px;line-height:25.05px">17</div>
<div class="c b" style="left:201.5px;top:712.65px;width:59.5px;height:25.05px;line-height:25.05px">3547</div>
<div class="c b" style="left:261px;top:712.65px;width:45.3px;height:25.05px;line-height:25.05px">1.1</div>
<div class="c b" style="left:306.3px;top:712.65px;width:60px;height:25.05px;line-height:25.05px">13.88</div>
<div class="c b" style="left:501.5px;top:712.65px;width:57.2px;height:25.05px;line-height:25.05px">2301</div>
<div class="c b" style="left:558.7px;top:712.65px;width:57px;height:25.05px;line-height:25.05px">25</div>
<div class="c b" style="left:615.7px;top:712.65px;width:57px;height:25.05px;line-height:25.05px">14</div>
<div class="c b" style="left:672.7px;top:712.65px;width:57px;height:25.05px;line-height:25.05px">24</div>
<div class="c b" style="left:729.7px;top:712.65px;width:56.9px;height:25.05px;line-height:25.05px">24</div>
<div class="c b" style="left:786.6px;top:712.65px;width:57.4px;height:25.05px;line-height:25.05px">209</div>
<div class="c b" style="left:261px;top:737.7px;width:45.3px;height:25.05px;line-height:25.05px">-0.525</div>
<div class="c b" style="left:366.3px;top:737.7px;width:78.2px;height:25.05px;line-height:25.05px">15.97</div>
<svg class="abs" style="left:82.9px;top:359.9px" width="9" height="7" viewBox="0 0 9 7"><path d="M0 0 H8.2 L4.1 6.6 Z" fill="#111"/></svg>
<div class="gl" style="left:98.7px;top:349.6px;height:25.3px;line-height:25.3px">2025 - 第 45 周</div>
<svg class="abs" style="left:82.8px;top:547.1px" width="9" height="9" viewBox="0 0 9 9"><path d="M0 0 L8.4 3.9 L0 7.8 Z" fill="#111"/></svg>
<div class="gl" style="left:98.8px;top:537.3px;height:25px;line-height:25px">2025 - 第 46 周</div>
<svg class="abs" style="left:82.8px;top:572.15px" width="9" height="9" viewBox="0 0 9 9"><path d="M0 0 L8.4 3.9 L0 7.8 Z" fill="#111"/></svg>
<div class="gl" style="left:98.8px;top:562.35px;height:25px;line-height:25px">2025 - 第 47 周</div>
<svg class="abs" style="left:82.8px;top:597.2px" width="9" height="9" viewBox="0 0 9 9"><path d="M0 0 L8.4 3.9 L0 7.8 Z" fill="#111"/></svg>
<div class="gl" style="left:98.8px;top:587.4px;height:25px;line-height:25px">2025 - 第 48 周</div>
<svg class="abs" style="left:82.8px;top:622.25px" width="9" height="9" viewBox="0 0 9 9"><path d="M0 0 L8.4 3.9 L0 7.8 Z" fill="#111"/></svg>
<div class="gl" style="left:98.8px;top:612.45px;height:25px;line-height:25px">2025 - 第 49 周</div>
<svg class="abs" style="left:82.8px;top:647.3px" width="9" height="9" viewBox="0 0 9 9"><path d="M0 0 L8.4 3.9 L0 7.8 Z" fill="#111"/></svg>
<div class="gl" style="left:98.8px;top:637.5px;height:25px;line-height:25px">2025 - 第 50 周</div>
<svg class="abs" style="left:82.8px;top:672.35px" width="9" height="9" viewBox="0 0 9 9"><path d="M0 0 L8.4 3.9 L0 7.8 Z" fill="#111"/></svg>
<div class="gl" style="left:98.8px;top:662.55px;height:25px;line-height:25px">2025 - 第 51 周</div>
<svg class="abs" style="left:82.8px;top:697.4px" width="9" height="9" viewBox="0 0 9 9"><path d="M0 0 L8.4 3.9 L0 7.8 Z" fill="#111"/></svg>
<div class="gl" style="left:98.8px;top:687.6px;height:25px;line-height:25px">2025 - 第 52 周</div>
<svg class="abs" style="left:82.8px;top:722.45px" width="9" height="9" viewBox="0 0 9 9"><path d="M0 0 L8.4 3.9 L0 7.8 Z" fill="#111"/></svg>
<div class="gl" style="left:98.8px;top:712.65px;height:25px;line-height:25px">2026 - 第 1 周</div>
<svg class="abs" style="left:73.6px;top:747.6px" width="9" height="7" viewBox="0 0 9 7"><path d="M0 0 H8.2 L4.1 6.6 Z" fill="#111"/></svg>
<div class="gl" style="left:89.4px;top:737.7px;height:25px;line-height:25px">2026</div>
<div class="vl" style="left:957.5px;top:249px;height:520px;background:#c0c0c0"></div>
<!-- selection -->
<div class="abs" style="left:611.5px;top:485px;width:65.5px;height:32.3px;border:3px solid #3079d4;border-radius:1px"></div>
<div class="abs" style="left:609.3px;top:483.4px;width:7.6px;height:7.6px;border-radius:50%;background:#1f6fd8;box-shadow:0 0 0 1.3px #fff"></div>
<div class="abs" style="left:671.6px;top:511.8px;width:7.6px;height:7.6px;border-radius:50%;background:#1f6fd8;box-shadow:0 0 0 1.3px #fff"></div>
<!-- annotation scribbles -->
<svg class="abs" style="left:0;top:0" width="1024" height="768" viewBox="0 0 1024 768">
<path d="M186.8 355.2 L183.5 351.6 L180.6 347.6 L178.2 343.3 L176.4 338.9 L175.1 334.1 L174.4 329.2 L174.2 324.2 L174.6 318.9 L175.5 313.6 L177.0 308.1 L179.0 302.6 L181.5 297.0 L184.5 291.4 L188.1 285.9 L192.0 280.4 L196.5 274.9 L201.3 269.6 L206.6 264.3 L212.2 259.3 L218.2 254.3 L224.5 249.6 L231.1 245.1 L237.9 240.9 L245.0 236.9 L252.2 233.2 L259.6 229.8 L267.1 226.7 L274.7 223.9 L282.3 221.5 L289.8 219.4 L297.4 217.7 L304.9 216.4 L312.2 215.4 L319.5 214.8 L326.5 214.6 L333.3 214.7 L339.9 215.3 L346.1 216.2 L352.1 217.4 L357.7 219.0 L363.0 221.0 L367.8 223.3 L372.3 225.9 L376.3 228.9 L379.9 232.1 L383.0 235.6 L385.6 239.4 L387.7 243.4 L389.3 247.6 L390.4 252.0 L391.0 256.6 L391.1 261.3 L390.6 266.2 L389.7 271.1 L388.2 276.1 L386.3 281.2 L383.9 286.3 L381.0 291.4 L377.6 296.4 L373.8 301.4 L369.6 306.3 L365.0 311.1 L360.1 315.8 L354.8 320.4 L349.1 324.7 L343.2 328.9 L337.1 332.8 L330.7 336.5 L324.1 340.0 L317.3 343.2 L310.4 346.1 L303.5 348.7 L296.4 351.0 L289.4 353.0 L282.3 354.6 L275.3 355.9 L268.4 356.9 L261.6 357.5 L254.9 357.8 L248.4 357.7 L242.2 357.3 L236.1 356.5 L230.4 355.4 L224.9 353.9 L219.8 352.2 L215.0 350.1 L210.6 347.7 L206.5 345.0 L202.9 342.1 L199.7 338.9 L197.0 335.4 L194.7 331.8 L192.8 327.9 L191.5 323.8 L190.6 319.6 L190.2 315.3 L190.2 310.8 L190.8 306.2 L191.7 301.5 L193.2 296.8 L195.1 292.1 L197.5 287.4 L200.2 282.7 L203.4 278.0 L207.0 273.4 L211.0 268.9 L215.3 264.5 L219.9 260.2 L224.9 256.1 L230.1 252.1 L235.6 248.4 L241.3 244.9 L247.2 241.5 L253.3 238.5 L259.5 235.6 L265.8 233.1 L272.2 230.8 L278.6 228.8 L285.1 227.1 L291.5 225.8 L297.8 224.7 L304.1 223.9 L310.3 223.5 L316.3 223.4 L322.2 223.6 L327.8 224.1 L333.3 224.9 L338.4 226.1 L343.3 227.5 L347.9 229.2 L352.2 231.2 L356.1 233.5 L359.7 236.0 L362.9 238.7 L365.7 241.7 L368.1 244.9 L370.1 248.3 L371.7 251.9 L372.9 255.6 L373.6 259.5 L373.9 263.4 L373.8 267.5 L373.2 271.7 L372.3 275.9 L370.9 280.1 L369.1 284.3 L366.9 288.6 L364.3 292.8 L361.4 297.0 L358.1 301.0 L354.5 305.0 L350.5 308.9 L346.3 312.7 L341.8 316.3 L337.0 319.7 L332.0 322.9 L326.9 326.0 L321.5 328.8 L316.0 331.4 L310.4 333.8 L304.7 335.9 L298.9 337.8 L293.1 339.3 L287.3 340.7 L281.5 341.7 L275.8 342.4 L270.1 342.9 L264.6 343.0 L259.2 342.9 L253.9 342.5 L248.9 341.8 L244.0 340.8 L239.4 339.6 L235.0 338.1 L230.9 336.3 L227.1 334.3 L223.6 332.0 L220.4 329.6 L217.5 326.9 L215.0 324.0 L212.5 321.3 L210.3 318.4 L208.5 315.4 L207.0 312.1 L205.9 308.8 L205.2 305.3 L204.9 301.7 L204.9 298.0 L205.4 294.2 L206.3 290.4 L207.5 286.5 L209.2 282.5 L211.2 278.6 L213.6 274.7 L216.4 270.8 L219.6 266.9 L223.0 263.1 L226.9 259.4 L231.0 255.8 L235.4 252.4 L240.1 249.0 L245.1 245.8 L250.3 242.8 L255.7 240.0 L261.3 237.3 L267.0 234.9 L272.9 232.7 L278.9 230.7 L284.9 229.0 L291.0 227.6 L297.1 226.4 L303.2 225.4 L309.3 224.8 L315.2 224.5 L321.1 224.4 L326.8 224.6 L332.4 225.2 L337.8 226.0 L343.0 227.1 L347.9 228.5 L352.6 230.1 L357.0 232.1 L361.0 234.3 L364.7 236.7 L368.1 239.5 L371.1 242.4 L373.7 245.6 L375.9 249.0 L377.7 252.6 L379.0 256.4 L379.9 260.3 L380.3 264.4 L380.3 268.6 L379.9 273.0 L379.0 277.4 L377.6 281.9 L375.8 286.4 L373.6 291.0 L370.9 295.6 L367.8 300.2 L364.3 304.7 L360.4 309.2 L356.1 313.6 L351.5 318.0 L346.6 322.2 L341.3 326.2 L335.7 330.1 L329.9 333.8 L323.8 337.4 L317.5 340.7 L311.1 343.8 L304.5 346.6 L297.7 349.2 L290.9 351.5 L284.1 353.6 L277.2 355.3 L270.3 356.7 L263.5 357.8 L256.8 358.6 L250.2 359.1 L243.7 359.2 L237.4 359.0 L231.4 358.5 L225.5 357.7 L220.0 356.5 L214.7 355.0 L209.8 353.1 L205.2 351.0 L201.0 348.6 L197.3 345.8" fill="none" stroke="#fdc20f" stroke-width="2.3" stroke-linecap="round" stroke-linejoin="round"/>
<path d="M226.9 359.6 L220.6 357.9 L214.8 355.8 L209.3 353.3 L204.3 350.4 L199.8 347.2 L195.8 343.7 L192.2 339.8 L189.2 335.7 L186.7 331.3 L184.8 326.6 L183.4 321.7 L182.6 316.7 L182.4 311.4 L182.7 306.0 L183.6 300.5 L185.0 294.9 L187.0 289.2 L189.6 283.4 L192.6 277.7 L196.2 272.0 L200.3 266.3 L204.8 260.7 L209.8 255.2 L215.2 249.8 L221.1 244.6 L227.2 239.6 L233.8 234.8 L240.6 230.2 L247.7 225.8 L255.0 221.7 L262.5 217.9 L270.2 214.4 L278.0 211.2 L285.9 208.4 L293.9 205.9 L301.8 203.8 L309.7 202.0 L317.5 200.7 L325.2 199.7 L332.8 199.1 L340.2 198.9 L347.3 199.0 L354.2 199.6 L360.8 200.6 L367.1 201.9 L373.0 203.6 L378.5 205.6 L383.6 208.1 L388.3 210.8 L392.5 213.9 L396.3 217.3 L399.5 220.9 L402.2 224.9 L404.4 229.1 L406.0 233.5 L407.1 238.1 L407.7 242.9 L407.7 247.9 L407.1 253.0 L406.0 258.2 L404.4 263.5 L402.2 268.9 L399.5 274.3 L396.3 279.7 L392.6 285.1 L388.4 290.4 L383.7 295.6 L378.7 300.8 L373.2 305.8 L367.3 310.7 L361.1 315.4 L354.6 319.9 L347.8 324.2 L340.7 328.3 L333.5 332.1 L326.0 335.6 L318.4 338.8 L310.7 341.7 L302.9 344.3 L295.1 346.6 L287.3 348.6 L279.5 350.2 L271.8 351.4 L264.3 352.2 L256.9 352.8 L249.7 352.9 L242.7 352.7 L236.0 352.1 L229.6 351.1 L223.5 349.8 L217.9 348.2 L212.7 346.2 L207.8 343.9 L203.4 341.3 L199.5 338.4 L196.0 335.2 L193.1 331.7 L190.6 327.9 L188.6 324.0 L187.2 319.8 L186.2 315.4 L185.8 310.8 L186.0 306.1 L186.7 301.3 L187.8 296.4 L189.6 291.4 L191.8 286.3 L194.5 281.2 L197.7 276.1 L201.3 271.1 L205.4 266.0 L209.9 261.1 L214.9 256.2 L220.2 251.5 L225.8 246.9 L231.8 242.5 L238.0 238.3 L244.6 234.3 L251.3 230.5 L258.2 226.9 L265.3 223.6 L272.5 220.6 L279.9 217.9 L287.2 215.5 L294.6 213.4 L301.9 211.6 L309.2 210.2 L316.4 209.1 L323.5 208.3 L330.4 207.9 L337.2 207.8 L343.7 208.1 L349.9 208.8 L355.9 209.7 L361.5 211.0 L366.8 212.7 L371.7 214.7 L376.2 216.9 L380.4 219.5 L384.0 222.4 L387.3 225.5 L390.0 228.9 L392.3 232.5 L394.2 236.3 L395.5 240.4 L396.3 244.6 L396.6 249.0 L396.4 253.5 L395.7 258.1 L394.5 262.8 L392.9 267.6 L390.7 272.4 L388.1 277.2 L385.0 282.1 L381.5 286.9 L377.5 291.6 L373.2 296.3 L368.5 300.9 L363.4 305.4 L358.0 309.7 L352.3 313.8 L346.3 317.8 L340.1 321.6 L333.7 325.1 L327.1 328.4 L320.3 331.5 L313.5 334.3 L306.5 336.8 L299.5 339.0 L292.5 340.9 L285.5 342.5 L278.6 343.8 L271.7 344.8 L265.0 345.4 L258.4 345.7 L252.0 345.7 L245.9 345.4 L239.9 344.7 L234.3 343.7 L228.9 342.4 L223.8 340.7 L219.0 338.8 L214.5 336.6 L210.4 334.2 L206.8 331.5 L203.5 328.5 L200.7 325.3 L198.4 321.8 L196.5 318.2 L195.1 314.4 L194.1 310.4 L193.7 306.2 L193.7 302.0 L194.2 297.6 L195.2 293.1 L196.7 288.6 L198.7 284.0 L201.1 279.4 L203.9 274.8 L207.2 270.2 L210.9 265.7 L215.1 261.2 L219.6 256.9 L224.4 252.6 L229.6 248.4 L235.1 244.4 L240.9 240.6 L246.9 236.9 L253.2 233.4 L259.6 230.2 L266.3 227.2 L273.0 224.4 L279.8 221.9 L286.7 219.7 L293.7 217.7 L300.6 216.0 L307.5 214.6 L314.3 213.6 L321.0 212.8 L327.6 212.3 L333.9 212.2 L340.1 212.3 L346.1 212.8 L351.7 213.6 L357.1 214.7 L362.2 216.0 L366.9 217.7 L371.3 219.6 L375.2 221.9 L378.8 224.3 L381.9 227.1 L384.6 230.0 L386.8 233.2 L388.6 236.6 L389.9 240.2 L390.7 243.9 L391.0 247.8 L390.8 251.9 L390.1 256.0 L389.0 260.2 L387.3 264.5 L385.2 268.9 L382.6 273.3 L379.6 277.7 L376.2 282.1 L372.3 286.4 L368.0 290.7 L363.3 295.0 L358.3 299.1 L353.0 303.1 L347.3 307.0 L341.4 310.7 L335.2 314.3 L328.8 317.7 L322.2 320.8 L315.4 323.8 L308.5 326.5 L301.6 329.0 L294.6 331.2 L287.5 333.1 L280.5 334.8 L273.5 336.2 L266.6 337.3 L259.8 338.1 L253.1 338.6 L246.6 338.8 L240.4 338.7 L234.4 338.3 L228.6 337.5 L223.2 336.5 L218.2 335.5 L213.4 334.1 L209.1 332.5 L205.1 330.5 L201.5 328.3 L198.4 325.8 L195.6 323.1 L193.4 320.1 L191.6 316.8 L190.2 313.4 L189.3 309.7 L189.0 305.9 L189.1 301.8 L189.7 297.7 L190.8 293.4 L192.3 289.0 L194.4 284.5 L196.9 279.9 L199.9 275.3 L203.3 270.7 L207.1 266.1 L211.4 261.5 L216.1 257.0 L221.1 252.5 L226.5 248.1 L232.2 243.8 L238.2 239.7 L244.5 235.7 L251.0 231.9 L257.8 228.3 L264.7 224.9 L271.7 221.8 L278.9 218.8 L286.2 216.2 L293.5 213.8 L300.8 211.8 L308.1 210.0 L315.4 208.6 L322.5 207.4 L329.5 206.6 L336.4 206.2 L343.1 206.1 L349.5 206.3 L355.7 206.9 L361.6 207.8 L367.2 209.0 L372.4 210.6 L377.3 212.5 L381.7 214.7 L385.8 217.3 L389.4 220.1 L392.6 223.3 L395.3 226.7 L397.5 230.3 L399.2 234.2 L400.5 238.4 L401.2 242.7 L401.4 247.3 L401.0 251.9 L400.2 256.8 L398.9 261.7 L397.0 266.8 L394.6 271.9 L391.8 277.1 L388.5 282.2 L384.7 287.4 L380.4 292.6 L375.8 297.7 L370.7 302.7 L365.3 307.6 L359.5 312.4 L353.4 317.0 L347.0 321.5 L340.3 325.8 L333.4 329.8 L326.3 333.6 L319.0 337.2 L311.6 340.4 L304.0 343.4 L296.5 346.1 L288.9 348.4 L281.3 350.4 L273.7 352.0 L266.3 353.3 L258.9 354.3 L251.8 354.8 L244.8 355.0 L238.0 354.8 L231.5 354.2 L225.3 353.2 L219.4 351.6 L213.9 349.6 L208.8 347.3 L204.1 344.6 L199.9 341.6 L196.2 338.3 L192.9 334.7 L190.2 330.9 L188.0 326.8 L186.3 322.4 L185.2 317.9 L184.6 313.2 L184.5 308.3 L185.0 303.3 L186.0 298.1 L187.6 292.9 L189.7 287.7 L192.3 282.3 L195.4 277.0 L198.9 271.7 L203.0 266.5 L207.5 261.3 L212.4 256.2 L217.7 251.2 L223.3 246.4 L229.4 241.7 L235.7 237.2 L242.3 233.0 L249.1 228.9 L256.1 225.1 L263.4 221.6 L270.7 218.4 L278.2 215.4 L285.7 212.8 L293.2 210.5 L300.8 208.5 L308.3 206.9 L315.7 205.6 L323.0 204.7 L330.1 204.1 L337.0 203.9 L343.7 204.0 L350.2 204.5 L356.3 205.4 L362.2 206.6 L367.7 208.1 L372.8 210.0 L377.5 212.2 L381.8 214.7 L385.6 217.5 L389.0 220.6 L391.9 223.9 L394.4 227.5 L396.3 231.4 L397.7 235.4 L398.6 239.7 L399.0 244.1 L398.8 248.6 L398.1 253.3 L397.0 258.1 L395.3 262.9 L393.1 267.8 L390.4 272.8 L387.2 277.7 L383.6 282.6 L379.6 287.5 L375.1 292.3 L370.2 297.1 L365.0 301.7 L359.4 306.2 L353.5 310.5 L347.3 314.6 L340.8 318.6 L334.1 322.3 L327.3 325.8 L320.2 329.1 L313.1 332.1 L305.8 334.8 L298.6 337.2 L291.2 339.4 L284.0 341.2 L276.7 342.7 L269.6 343.9 L262.5 344.7 L255.7 345.2 L249.0 345.4 L242.5 345.3 L236.3 344.8 L230.4 344.0 L224.8 342.9" fill="none" stroke="#f41e3e" stroke-width="2.3" stroke-linecap="round" stroke-linejoin="round"/>
</svg>
<!-- floating buttons -->
<div class="abs" style="left:850.5px;top:710.5px;width:41.5px;height:41.5px;border-radius:50%;background:#16a54d;box-shadow:0 2px 6px rgba(0,0,0,0.2)"></div>
<svg class="abs" style="left:861px;top:725px" width="22" height="15" viewBox="0 0 22 15">
<rect x="1" y="1" width="19.6" height="12" rx="2.2" fill="none" stroke="#93efb9" stroke-width="1.3"/>
<g fill="#93efb9"><rect x="4" y="3.8" width="1.4" height="1.3"/><rect x="6.6" y="3.8" width="1.4" height="1.3"/><rect x="9.2" y="3.8" width="1.4" height="1.3"/><rect x="11.8" y="3.8" width="1.4" height="1.3"/><rect x="14.4" y="3.8" width="1.4" height="1.3"/>
<rect x="4" y="6.4" width="1.4" height="1.3"/><rect x="6.6" y="6.4" width="1.4" height="1.3"/><rect x="9.2" y="6.4" width="1.4" height="1.3"/><rect x="11.8" y="6.4" width="1.4" height="1.3"/><rect x="14.4" y="6.4" width="1.4" height="1.3"/>
<rect x="5.6" y="9" width="10" height="1.3"/></g>
</svg>
<div class="abs" style="left:904px;top:711px;width:105px;height:41.5px;border-radius:21px;background:#16a54d;box-shadow:0 2px 6px rgba(0,0,0,0.2)"></div>
<svg class="abs" style="left:918px;top:721px" width="15" height="21" viewBox="0 0 15 21">
<path d="M9.6 1.2 L2.4 11.6 H7.2 L5.6 19.8 L12.8 9.2 H8 Z" fill="#93efb9"/>
</svg>
<div class="abs" style="left:944.5px;top:721px;font-size:16px;color:#c6f2d2;line-height:20px;letter-spacing:0.3px;-webkit-text-stroke:0.35px #c6f2d2">輸入格</div>
</body></html>
